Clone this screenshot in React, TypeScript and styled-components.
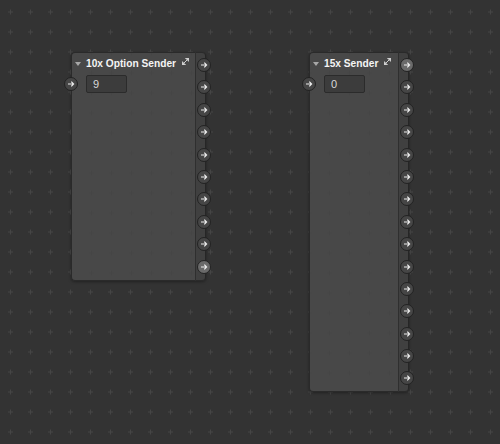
import styled, { createGlobalStyle } from 'styled-components';

const GlobalStyle = createGlobalStyle`
  html, body {
    margin: 0;
    padding: 0;
    background: #333333;
  }
`;

const plus = `url("data:image/svg+xml,%3Csvg xmlns='http://www.w3.org/2000/svg' width='20' height='20'%3E%3Crect x='8' y='9.5' width='5' height='1' fill='%23454545'/%3E%3Crect x='10' y='7.5' width='1' height='5' fill='%23454545'/%3E%3C/svg%3E")`;

const Canvas = styled.div`
  position: relative;
  width: 500px;
  height: 444px;
  overflow: hidden;
  background-color: #333333;
  background-image: ${plus};
  background-position: 0 2px;
  font-family: 'Liberation Sans', Arial, sans-serif;
`;

const Node = styled.div<{ $x: number; $height: number }>`
  position: absolute;
  left: ${(p) => p.$x}px;
  top: 52px;
  height: ${(p) => p.$height}px;
  display: flex;
  box-shadow: 0 1px 3px rgba(0, 0, 0, 0.35);
  border-radius: 4px;
`;

const Body = styled.div<{ $width: number }>`
  width: ${(p) => p.$width}px;
  display: flex;
  flex-direction: column;
  background-color: rgba(74, 74, 74, 0.92);
  background-image: ${plus};
  background-position: -71px -50px;
  border: 1px solid #2a2a2a;
  border-right: none;
  border-radius: 4px 0 0 4px;
`;

const TitleBar = styled.div`
  display: flex;
  align-items: center;
  height: 21px;
  padding-left: 3px;
  color: #f4f4f4;
  font-weight: bold;
  font-size: 10.2px;
  white-space: nowrap;
`;

const Triangle = styled.span`
  width: 0;
  height: 0;
  border-left: 3px solid transparent;
  border-right: 3px solid transparent;
  border-top: 4px solid #a8a8a8;
  margin-right: 5px;
`;

const Resize = styled.svg`
  margin-left: 6px;
  margin-top: -4px;
  flex-shrink: 0;
`;

const InletRow = styled.div`
  display: flex;
  align-items: center;
  margin-top: 1px;
  margin-left: -8px;
`;

const NumberBox = styled.div`
  width: 41px;
  height: 18px;
  margin-left: 8px;
  box-sizing: border-box;
  border: 1px solid #2b2b2b;
  border-radius: 2px;
  background: #3c3c3c;
  color: #d8d8d8;
  font-size: 11px;
  line-height: 16px;
  padding-left: 6px;
`;

const Strip = styled.div`
  position: relative;
  width: 9px;
  background: #404040;
  border-left: 1px solid #2f2f2f;
  border-top: 1px solid #2a2a2a;
  border-bottom: 1px solid #2a2a2a;
  border-right: 1px solid #262626;
  border-radius: 0 4px 4px 0;
`;

const OutletColumn = styled.div`
  position: absolute;
  top: 5px;
  left: 1px;
  display: flex;
  flex-direction: column;
  gap: 8.4px;
`;

const Port = styled.div<{ $lit?: boolean }>`
  flex-shrink: 0;
  width: 14px;
  height: 14px;
  box-sizing: border-box;
  border-radius: 50%;
  border: 1px solid #222222;
  background: ${(p) => (p.$lit ? '#6a6a6a' : '#464646')};
  display: flex;
  align-items: center;
  justify-content: center;
`;

const Arrow = () => (
  <svg width="8" height="8" viewBox="0 0 8 8">
    <path d="M1 4H6.6M4.3 1.7L6.6 4L4.3 6.3" stroke="#eeeeee" strokeWidth="1.15" fill="none" />
  </svg>
);

const ResizeIcon = () => (
  <Resize width="7" height="7" viewBox="0 0 7 7">
    <path d="M3.5 0H7V3.5Z M0 3.5V7H3.5Z M6 1L1 6" stroke="#cfcfcf" strokeWidth="1" fill="#cfcfcf" />
  </Resize>
);

interface NodeProps {
  x: number;
  width: number;
  height: number;
  title: string;
  value: string;
  outlets: number;
  lit: number;
}

const PatchNode = ({ x, width, height, title, value, outlets, lit }: NodeProps) => (
  <Node $x={x} $height={height}>
    <Body $width={width}>
      <TitleBar>
        <Triangle />
        {title}
        <ResizeIcon />
      </TitleBar>
      <InletRow>
        <Port>
          <Arrow />
        </Port>
        <NumberBox>{value}</NumberBox>
      </InletRow>
    </Body>
    <Strip>
      <OutletColumn>
        {Array.from({ length: outlets }).map((_, i) => (
          <Port key={i} $lit={i === lit}>
            <Arrow />
          </Port>
        ))}
      </OutletColumn>
    </Strip>
  </Node>
);

export default function App() {
  return (
    <>
      <GlobalStyle />
      <Canvas>
        <PatchNode x={71} width={123} height={229} title="10x Option Sender" value="9" outlets={10} lit={9} />
        <PatchNode x={309} width={88} height={340} title="15x Sender" value="0" outlets={15} lit={0} />
      </Canvas>
    </>
  );
}
